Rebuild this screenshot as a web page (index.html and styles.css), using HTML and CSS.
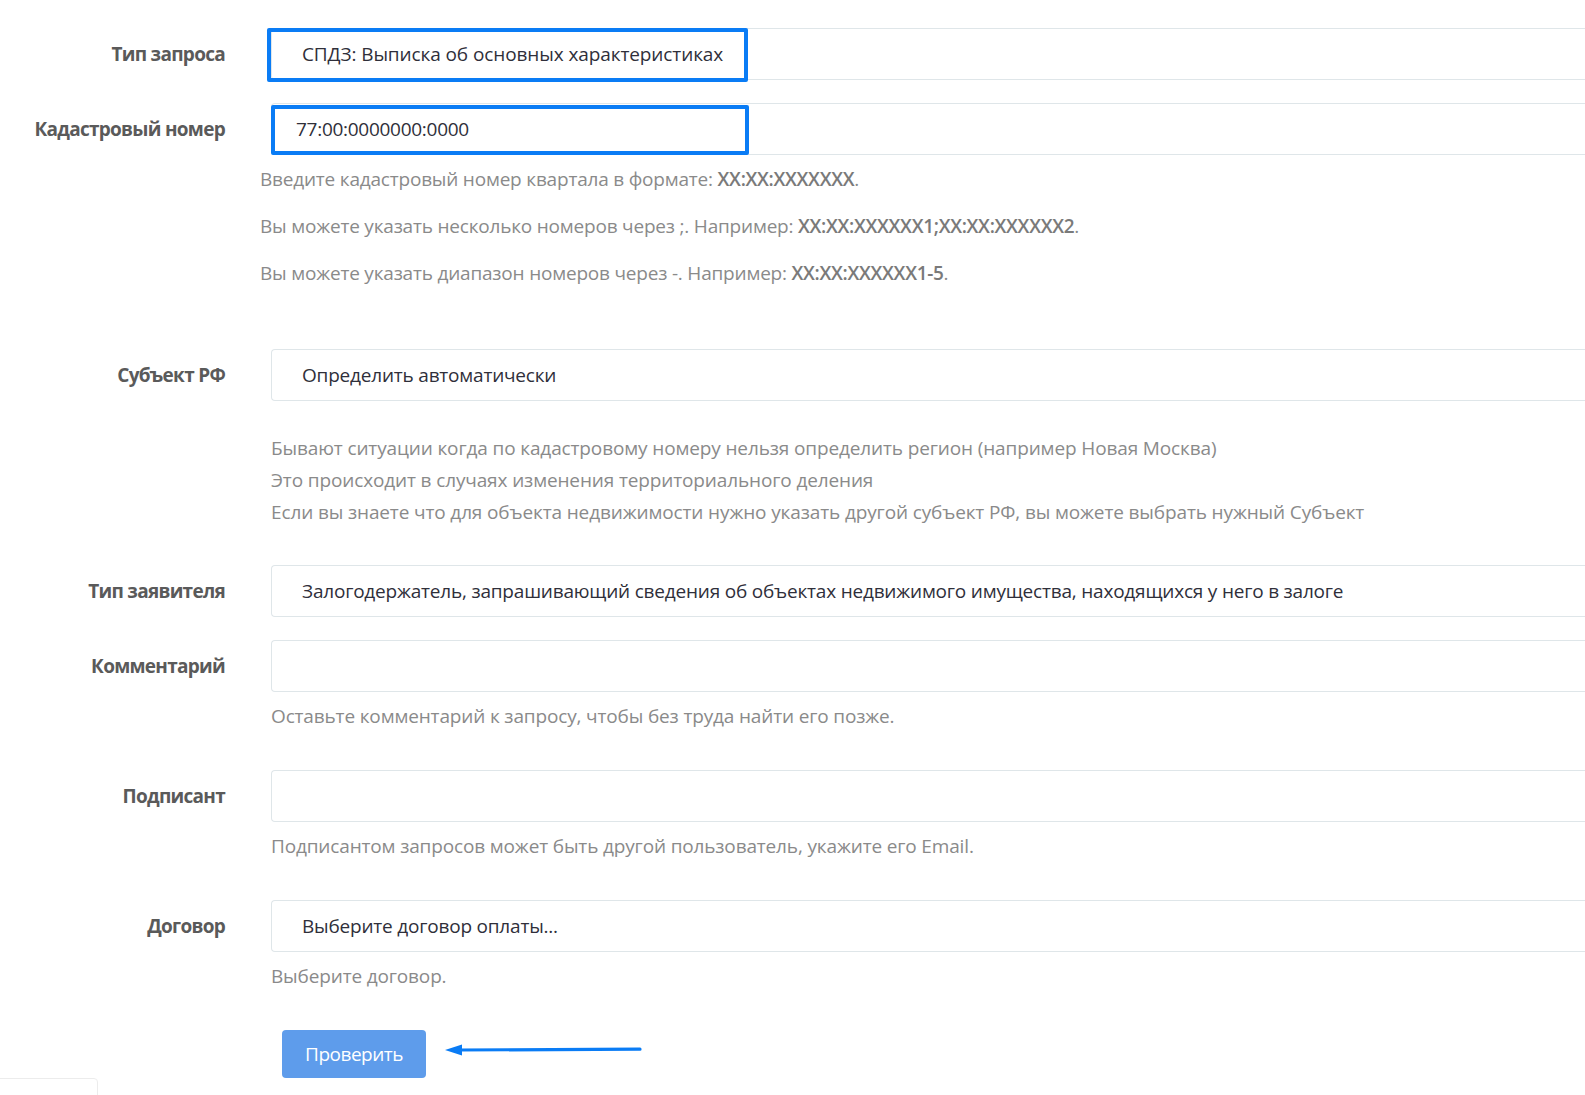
FILE: index.html
```html
<!DOCTYPE html>
<html lang="ru">
<head>
<meta charset="utf-8">
<title>Запрос</title>
<link rel="stylesheet" href="styles.css">
</head>
<body>
<form class="form">
  <div class="group g1">
    <label class="label">Тип запроса</label>
    <div class="field">
      <div class="input input-top">СПДЗ: Выписка об основных характеристиках</div>
      <span class="mark mark1"></span>
    </div>
  </div>

  <div class="group g2">
    <label class="label">Кадастровый номер</label>
    <div class="field">
      <div class="input input-num">77:00:0000000:0000</div>
      <span class="mark mark2"></span>
    </div>
    <div class="help help-wide">
      <p>Введите кадастровый номер квартала в формате: <b>XX:XX:XXXXXXX</b>.</p>
      <p>Вы можете указать несколько номеров через ;. Например: <b>XX:XX:XXXXXX1;XX:XX:XXXXXX2</b>.</p>
      <p>Вы можете указать диапазон номеров через -. Например: <b>XX:XX:XXXXXX1-5</b>.</p>
    </div>
  </div>

  <div class="group g3">
    <label class="label">Субъект РФ</label>
    <div class="field">
      <div class="input">Определить автоматически</div>
    </div>
    <div class="help help-tall">
      Бывают ситуации когда по кадастровому номеру нельзя определить регион (например Новая Москва)<br>
      Это происходит в случаях изменения территориального деления<br>
      Если вы знаете что для объекта недвижимости нужно указать другой субъект РФ, вы можете выбрать нужный Субъект
    </div>
  </div>

  <div class="group g4">
    <label class="label">Тип заявителя</label>
    <div class="field">
      <div class="input">Залогодержатель, запрашивающий сведения об объектах недвижимого имущества, находящихся у него в залоге</div>
    </div>
  </div>

  <div class="group g5">
    <label class="label">Комментарий</label>
    <div class="field">
      <div class="input"></div>
    </div>
    <div class="help">Оставьте комментарий к запросу, чтобы без труда найти его позже.</div>
  </div>

  <div class="group g6">
    <label class="label">Подписант</label>
    <div class="field">
      <div class="input"></div>
    </div>
    <div class="help">Подписантом запросов может быть другой пользователь, укажите его Email.</div>
  </div>

  <div class="group g7">
    <label class="label">Договор</label>
    <div class="field">
      <div class="input">Выберите договор оплаты...</div>
    </div>
    <div class="help">Выберите договор.</div>
  </div>

  <div class="group g8">
    <div class="actions">
      <button type="button" class="btn">Проверить</button>
      <svg class="arrow" width="198" height="14" viewBox="0 0 198 14">
        <path d="M14 7 L195 6.2" stroke="#0a7cf5" stroke-width="3.2" stroke-linecap="round" fill="none"/>
        <polygon points="0,7 17,1.5 17,12.5" fill="#0a7cf5"/>
      </svg>
    </div>
  </div>
</form>
<div class="corner"></div>
</body>
</html>
```
FILE: styles.css
```css
html, body {
  margin: 0;
  padding: 0;
  height: 1095px;
  overflow: hidden;
  background: #fff;
}
body {
  font-family: "Open Sans", "Noto Sans", sans-serif;
  font-size: 19px;
  color: #333;
  letter-spacing: -0.15px;
}
.form {
  padding-top: 28px;
}
.group {
  display: grid;
  grid-template-columns: 225px 1fr;
  column-gap: 46px;
}
.label {
  grid-column: 1;
  text-align: right;
  font-weight: 700;
  color: #5a5a5a;
  line-height: 52px;
  height: 52px;
  letter-spacing: -0.72px;
}
.field {
  grid-column: 2;
  position: relative;
}
.input {
  box-sizing: border-box;
  height: 52px;
  border: 1px solid #dfe6e9;
  border-right: none;
  border-radius: 4px 0 0 4px;
  padding: 0 0 0 30px;
  line-height: 50px;
  color: #2f2f3a;
  white-space: nowrap;
  overflow: hidden;
  letter-spacing: -0.2px;
}
.input-top {
  letter-spacing: -0.1px;
}
.input-num {
  padding-left: 24px;
  letter-spacing: -0.28px;
}
.mark {
  position: absolute;
  box-sizing: border-box;
  border: 4px solid #0a7cf5;
  border-radius: 2px;
}
.mark1 {
  left: -4px;
  top: 0;
  width: 481px;
  height: 54px;
}
.mark2 {
  left: 0;
  top: 2px;
  width: 478px;
  height: 50px;
}
.help {
  grid-column: 2;
  color: #8a8a8a;
  line-height: 24px;
  margin-top: 12px;
}
.help b {
  color: #7a7a7a;
  font-weight: 600;
}
.help-wide {
  margin-left: -11px;
  letter-spacing: -0.2px;
}
.help-wide b {
  letter-spacing: -0.3px;
}
.help-wide p {
  margin: 0 0 22.8px;
}
.help-wide p:last-child {
  margin-bottom: 0;
}
.help-tall {
  line-height: 32.3px;
  margin-top: 31px;
  letter-spacing: -0.13px;
}
.g1 { margin-bottom: 23px; }
.g2 { margin-bottom: 64px; }
.g3 { margin-bottom: 37px; }
.g4 { margin-bottom: 23px; }
.g5 { margin-bottom: 41.5px; }
.g6 { margin-bottom: 42px; }
.g7 { margin-bottom: 42.5px; }
.actions {
  grid-column: 2;
  display: flex;
  align-items: center;
  gap: 19px;
  margin-left: 11px;
}
.btn {
  width: 144px;
  height: 48px;
  background: #5e9ceb;
  color: #fff;
  border: none;
  border-radius: 4px;
  font-family: inherit;
  font-size: 19px;
  letter-spacing: -0.5px;
  padding: 0;
}
.arrow {
  display: block;
  margin-top: -8px;
}
.corner {
  position: fixed;
  left: -4px;
  bottom: -6px;
  width: 100px;
  height: 21px;
  border: 1px solid #ececec;
  border-radius: 4px;
}
```
